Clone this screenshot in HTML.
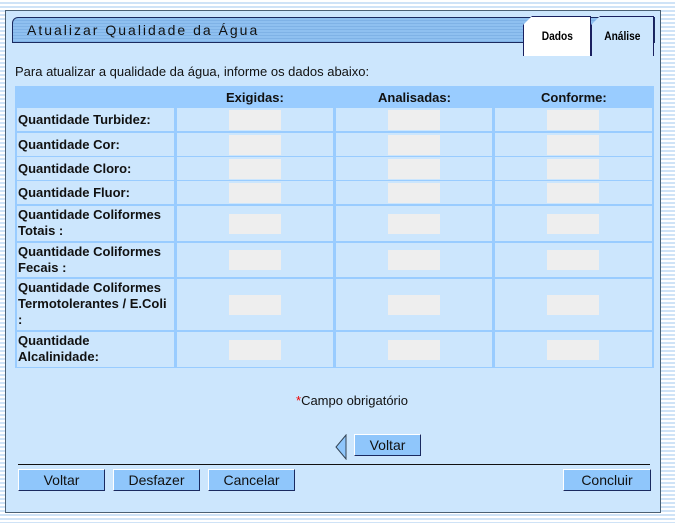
<!DOCTYPE html>
<html><head><style>
body{margin:0;width:675px;height:523px;overflow:hidden;background:repeating-linear-gradient(180deg,#fff 0,#fff 2px,#cfe3f7 2px,#cfe3f7 4px);font-family:"Liberation Sans",sans-serif;position:relative}
.a{position:absolute}
#panel{left:5px;top:10px;width:656px;height:503px;background:#cce6fd;border:1px solid #4a6074;box-sizing:border-box}
#title{left:12px;top:17px;width:643px;height:26px;background:repeating-linear-gradient(180deg,#8fc0f0 0,#8fc0f0 2px,#7fb2e6 2px,#7fb2e6 3px);border:1px solid #1a2a60;border-radius:6px 0 0 0;box-sizing:border-box;font-size:14px;letter-spacing:2px;color:#111;padding:4px 0 0 14px}
.tab{top:16px;height:40px;border:1px solid #1a2060;border-bottom:none;box-sizing:border-box;font-weight:bold;font-size:12px;text-align:center;padding-top:12px}
.tab span{display:inline-block;transform:scaleX(0.85)}
.lbl{font-weight:bold;font-size:13px;color:#111;line-height:16px}
.cell{background:#cce6fd}
.inp{background:#eeeeee;width:52px;height:20px}
.btn{background:#8fc6fb;border:1px solid;border-color:#fff #1a2a60 #1a2a60 #fff;box-sizing:border-box;font-size:14px;text-align:center;color:#111;height:22px;line-height:20px}
</style></head><body>
<div id="panel" class="a"></div>
<div id="title" class="a">Atualizar Qualidade da Água</div>
<div class="a tab" style="left:523px;width:68px;background:#fff;clip-path:polygon(9px 0,100% 0,100% 100%,0 100%,0 9px)"><span>Dados</span></div>
<div class="a tab" style="left:591px;width:63px;background:#cce6fd;clip-path:polygon(9px 0,100% 0,100% 100%,0 100%,0 9px)"><span>Análise</span></div>
<div class="a" style="left:15px;top:64px;font-size:13px;color:#111">Para atualizar a qualidade da água, informe os dados abaixo:</div>
<div class="a" style="left:15px;top:86px;width:639px;height:282px;background:#99ccff"></div>
<div class="a lbl" style="left:226px;top:90px">Exigidas:</div>
<div class="a lbl" style="left:378px;top:90px">Analisadas:</div>
<div class="a lbl" style="left:541px;top:90px">Conforme:</div>
<div id="rows"></div>
<div class="a" style="left:296px;top:393px;font-size:13px;color:#111"><span style="color:#e00">*</span>Campo obrigatório</div>
<svg class="a" style="left:334px;top:434px" width="14" height="26"><polygon points="12,1 12,25 2,13" fill="#8fc6fb" stroke="#345" stroke-width="1"/></svg>
<div class="a btn" style="left:354px;top:434px;width:67px">Voltar</div>
<div class="a" style="left:18px;top:464px;width:632px;height:1px;background:#111"></div>
<div class="a btn" style="left:18px;top:469px;width:87px">Voltar</div>
<div class="a btn" style="left:113px;top:469px;width:87px">Desfazer</div>
<div class="a btn" style="left:208px;top:469px;width:87px">Cancelar</div>
<div class="a btn" style="left:563px;top:469px;width:88px">Concluir</div>
<script>
var rows=[[108,23,"Quantidade Turbidez:"],[133,23,"Quantidade Cor:"],[157,23,"Quantidade Cloro:"],[181,23,"Quantidade Fluor:"],[206,35,"Quantidade Coliformes<br>Totais :"],[243,34,"Quantidade Coliformes<br>Fecais :"],[279,51,"Quantidade Coliformes<br>Termotolerantes / E.Coli<br>:"],[332,35,"Quantidade<br>Alcalinidade:"]];
var cols=[[17,157],[177,156],[336,156],[495,157]],h="";
rows.forEach(function(r){cols.forEach(function(c,i){
h+='<div class="a cell" style="left:'+c[0]+'px;top:'+r[0]+'px;width:'+c[1]+'px;height:'+r[1]+'px">';
if(i==0)h+='<div class="lbl" style="padding:'+(r[1]>30?1:4)+'px 0 0 1px">'+r[2]+'</div>';
else h+='<div class="inp a" style="left:52px;top:'+Math.round((r[1]-20)/2)+'px"></div>';
h+='</div>';});});
document.getElementById('rows').outerHTML=h;
</script>
</body></html>
